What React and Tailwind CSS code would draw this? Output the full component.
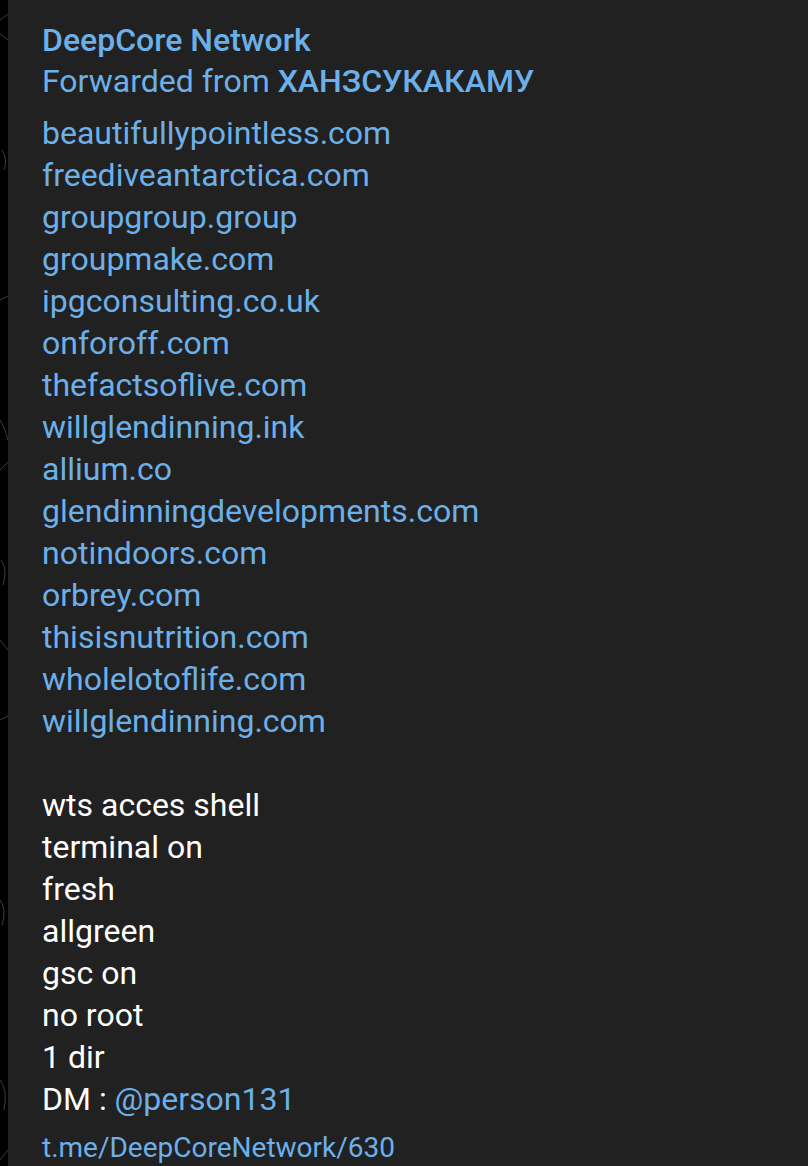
import React from "react";

const links = [
  "beautifullypointless.com",
  "freediveantarctica.com",
  "groupgroup.group",
  "groupmake.com",
  "ipgconsulting.co.uk",
  "onforoff.com",
  "thefactsoflive.com",
  "willglendinning.ink",
  "allium.co",
  "glendinningdevelopments.com",
  "notindoors.com",
  "orbrey.com",
  "thisisnutrition.com",
  "wholelotoflife.com",
  "willglendinning.com",
];

const lines = ["wts acces shell", "terminal on", "fresh", "allgreen", "gsc on", "no root", "1 dir"];

function Doodles() {
  return (
    <svg width="8" height="1166" className="block" fill="none" stroke="#3a3f3a" strokeWidth="1">
      <path d="M0 20 L8 14 M0 34 L8 40 M2 150 Q8 160 4 170 M0 300 L8 296 M0 420 Q6 430 8 440 M0 470 L8 462 M1 560 Q8 570 3 585 M0 640 L8 650 M0 720 L8 716 M0 900 Q7 910 2 925 M0 1080 Q8 1090 4 1110 M0 1160 L8 1150" />
    </svg>
  );
}

export default function App() {
  return (
    <div className="flex w-[808px] h-[1166px] overflow-hidden bg-black" style={{ fontFamily: "Roboto, 'Noto Sans', sans-serif" }}>
      <div className="w-2 shrink-0 bg-black">
        <Doodles />
      </div>
      <div className="flex-1 bg-[#212121] pl-[34px] pt-[19px] text-[32px] leading-[42px]">
        <div className="font-medium text-[#6cb0ea]">DeepCore Network</div>
        <div className="text-[#6cb0ea] leading-[40px]">
          Forwarded from <span className="font-medium">ХАНЗСУКАКАМУ</span>
        </div>
        <div className="mt-[11px]">
          {links.map((l) => (
            <div key={l} className="text-[#6cb0ea]">{l}</div>
          ))}
          <div className="h-[42px]" />
          {lines.map((l) => (
            <div key={l} className="text-white">{l}</div>
          ))}
          <div className="text-white">
            DM : <span className="text-[#6cb0ea]">@person131</span>
          </div>
        </div>
        <div className="mt-[8px] text-[28px] leading-[40px] text-[#6cb0ea]">t.me/DeepCoreNetwork/630</div>
      </div>
    </div>
  );
}
